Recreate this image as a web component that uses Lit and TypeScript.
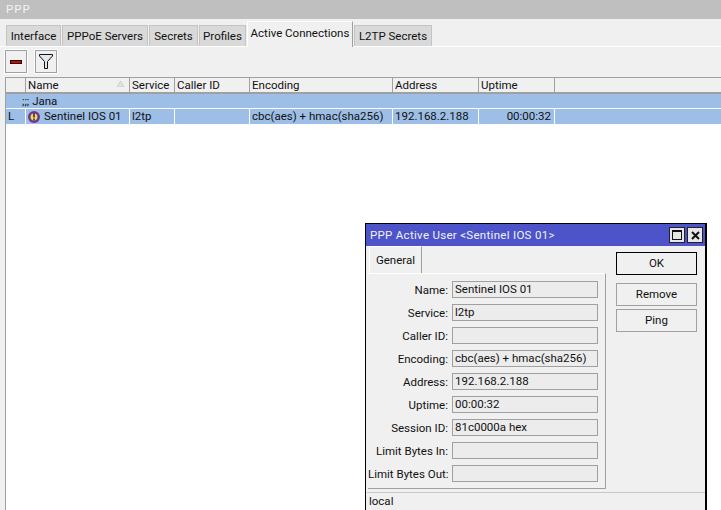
import { LitElement, html, css } from 'lit';
import { customElement } from 'lit/decorators.js';

const TABS = [
  { label: 'Interface', width: 55 },
  { label: 'PPPoE Servers', width: 86 },
  { label: 'Secrets', width: 49 },
  { label: 'Profiles', width: 47 },
  { label: 'Active Connections', width: 106, active: true },
  { label: 'L2TP Secrets', width: 78 }
];

const COLUMNS = [
  { label: '', width: 20 },
  { label: 'Name', width: 104, sort: true },
  { label: 'Service', width: 45 },
  { label: 'Caller ID', width: 75 },
  { label: 'Encoding', width: 143 },
  { label: 'Address', width: 86 },
  { label: 'Uptime', width: 76 }
];

const FIELDS = [
  ['Name:', 'Sentinel IOS 01'],
  ['Service:', 'l2tp'],
  ['Caller ID:', ''],
  ['Encoding:', 'cbc(aes) + hmac(sha256)'],
  ['Address:', '192.168.2.188'],
  ['Uptime:', '00:00:32'],
  ['Session ID:', '81c0000a hex'],
  ['Limit Bytes In:', ''],
  ['Limit Bytes Out:', '']
];

@customElement('app-root')
export class AppRoot extends LitElement {
  static styles = css`
    :host {
      display: block;
      position: relative;
      width: 721px;
      height: 510px;
      overflow: hidden;
      background: #f0f0f0;
      font-family: Roboto, 'Liberation Sans', sans-serif;
      font-size: 11.5px;
      color: #111;
    }
    .window {
      display: flex;
      flex-direction: column;
      height: 510px;
    }
    .titlebar {
      height: 19px;
      flex: none;
      background: #bfbfbf;
      color: #f4f4f4;
      padding-left: 6px;
      line-height: 19px;
      letter-spacing: 1px;
    }
    .tabs {
      height: 28px;
      flex: none;
      box-sizing: border-box;
      display: flex;
      align-items: flex-end;
      padding-left: 6px;
      gap: 1px;
      border-bottom: 1px solid #fff;
    }
    .tab {
      height: 21px;
      box-sizing: border-box;
      background: #d9d9d9;
      border: 1px solid #c4c4c4;
      border-bottom: none;
      text-align: center;
      line-height: 20px;
      flex: none;
    }
    .tab.active {
      height: 26px;
      background: #f0f0f0;
      border-color: #fff;
      border-right-color: #a0a0a0;
      line-height: 22px;
      margin-bottom: -1px;
    }
    .toolbar {
      height: 30px;
      flex: none;
      display: flex;
      align-items: flex-start;
      gap: 8px;
      padding: 3px 0 0 5px;
      box-sizing: border-box;
    }
    .tool {
      width: 22px;
      height: 23px;
      box-sizing: border-box;
      border: 1px solid #a0a0a0;
      outline: 1px solid #fff;
      display: flex;
      align-items: center;
      justify-content: center;
    }
    .table {
      flex: 1;
      margin-left: 5px;
      background: #fff;
      border-left: 1px solid #a0a0a0;
    }
    .head {
      height: 17px;
      box-sizing: border-box;
      display: flex;
      background: #f0f0f0;
      border-top: 1px solid #a0a0a0;
      border-bottom: 2px solid #a0a0a0;
    }
    .head .col {
      position: relative;
      box-sizing: border-box;
      border-right: 1px solid #a0a0a0;
      padding-left: 2px;
      line-height: 15px;
      white-space: nowrap;
    }
    .sort {
      position: absolute;
      right: 5px;
      top: 3px;
    }
    .group {
      height: 14px;
      background: #9dbee7;
      padding-left: 16px;
      line-height: 14px;
      margin-bottom: 1px;
    }
    .row {
      height: 15px;
      display: flex;
      background: #9dbee7;
      line-height: 15px;
    }
    .cell {
      box-sizing: border-box;
      border-right: 1px solid #fff;
      padding-left: 2px;
      white-space: nowrap;
      display: flex;
      align-items: center;
      gap: 4px;
    }
    .cell.right {
      justify-content: flex-end;
      padding-right: 3px;
    }
    .spacer {
      flex: 1;
    }
    .dialog {
      position: absolute;
      left: 365px;
      top: 223px;
      width: 342px;
      height: 300px;
      box-sizing: border-box;
      background: #f0f0f0;
      border: 1px solid #000;
      border-right-width: 2px;
    }
    .dlg-title {
      height: 22px;
      background: #4d53c8;
      color: #f2f2f2;
      display: flex;
      align-items: center;
      justify-content: space-between;
      padding: 0 2px 0 4px;
      letter-spacing: 0.3px;
    }
    .dlg-icons {
      display: flex;
      gap: 2px;
    }
    .dlg-icon {
      width: 14px;
      height: 14px;
      background: #e6e6e6;
      border: 1px solid #222;
      display: flex;
      align-items: center;
      justify-content: center;
    }
    .dlg-body {
      display: flex;
      height: 243px;
    }
    .dlg-left {
      width: 240px;
      padding-left: 2px;
      box-sizing: border-box;
      flex: none;
    }
    .dlg-tabs {
      height: 27px;
      padding-left: 1px;
      box-sizing: border-box;
    }
    .dlg-tab {
      width: 53px;
      height: 27px;
      box-sizing: border-box;
      border-top: 1px solid #fff;
      border-left: 1px solid #fff;
      border-right: 1px solid #a0a0a0;
      text-align: center;
      line-height: 26px;
    }
    .panel {
      height: 216px;
      box-sizing: border-box;
      border-top: 1px solid #fff;
      border-right: 1px solid #a0a0a0;
      border-bottom: 1px solid #a0a0a0;
      padding-top: 7px;
      display: flex;
      flex-direction: column;
      gap: 6px;
    }
    .field {
      display: flex;
      height: 17px;
      align-items: center;
      gap: 4px;
    }
    .field label {
      width: 80px;
      text-align: right;
      white-space: nowrap;
    }
    .value {
      width: 146px;
      height: 17px;
      box-sizing: border-box;
      border: 1px solid #a0a0a0;
      background: #ececec;
      padding-left: 2px;
      line-height: 15px;
      white-space: nowrap;
    }
    .actions {
      margin-left: 10px;
      padding-top: 6px;
      display: flex;
      flex-direction: column;
      gap: 3px;
    }
    .btn {
      width: 81px;
      height: 23px;
      box-sizing: border-box;
      border: 1px solid #a0a0a0;
      text-align: center;
      line-height: 21px;
    }
    .btn.default {
      border-color: #000;
      margin-bottom: 5px;
    }
    .status {
      margin: 3px 0 0 1px;
      border-top: 1px solid #c8c8c8;
      padding-left: 2px;
      line-height: 16px;
    }
  `;

  render() {
    return html`
      <div class="window">
        <div class="titlebar">PPP</div>
        <div class="tabs">
          ${TABS.map(t => html`
            <div class="tab ${t.active ? 'active' : ''}" style="width:${t.width}px">${t.label}</div>
          `)}
        </div>
        <div class="toolbar">
          <div class="tool">
            <svg width="12" height="4"><rect width="12" height="4" fill="#111"/><rect x="1" y="1" width="10" height="2" fill="#e00000"/></svg>
          </div>
          <div class="tool">
            <svg width="14" height="15" viewBox="0 0 14 15"><path d="M.5.5h13v1.5L8.5 7.5v7h-3v-7L.5 2z" fill="#dfe9ee" stroke="#111"/></svg>
          </div>
        </div>
        <div class="table">
          <div class="head">
            ${COLUMNS.map(c => html`
              <div class="col" style="width:${c.width}px">${c.label}
                ${c.sort ? html`<svg class="sort" width="7" height="6"><path d="M3.5 0L7 6H0z" fill="#e4e4e4" stroke="#bbb" stroke-width=".6"/></svg>` : ''}
              </div>
            `)}
          </div>
          <div class="group">;;; Jana</div>
          <div class="row">
            <div class="cell" style="width:20px">L</div>
            <div class="cell" style="width:104px">
              <svg width="12" height="12" viewBox="0 0 12 12" style="flex:none">
                <circle cx="6" cy="6" r="6" fill="#6b3a8f"/>
                <circle cx="6" cy="6" r="3.4" fill="#f0e040"/>
                <rect x="5" y="2" width="2" height="4.5" fill="#6b3a8f"/>
                <rect x="5" y="7.5" width="2" height="2" fill="#6b3a8f"/>
              </svg>
              Sentinel IOS 01
            </div>
            <div class="cell" style="width:45px">l2tp</div>
            <div class="cell" style="width:75px"></div>
            <div class="cell" style="width:143px">cbc(aes) + hmac(sha256)</div>
            <div class="cell" style="width:86px">192.168.2.188</div>
            <div class="cell right" style="width:76px">00:00:32</div>
            <div class="spacer"></div>
          </div>
        </div>
      </div>

      <div class="dialog">
        <div class="dlg-title">
          <span>PPP Active User &lt;Sentinel IOS 01&gt;</span>
          <span class="dlg-icons">
            <span class="dlg-icon"><svg width="10" height="10"><rect x=".5" y=".5" width="9" height="9" fill="none" stroke="#111"/><rect width="10" height="2" fill="#111"/></svg></span>
            <span class="dlg-icon"><svg width="9" height="9"><path d="M1 1l7 7M8 1l-7 7" stroke="#111" stroke-width="2"/></svg></span>
          </span>
        </div>
        <div class="dlg-body">
          <div class="dlg-left">
            <div class="dlg-tabs"><div class="dlg-tab">General</div></div>
            <div class="panel">
              ${FIELDS.map(([k, v]) => html`
                <div class="field"><label>${k}</label><div class="value">${v}</div></div>
              `)}
            </div>
          </div>
          <div class="actions">
            <div class="btn default">OK</div>
            <div class="btn">Remove</div>
            <div class="btn">Ping</div>
          </div>
        </div>
        <div class="status">local</div>
      </div>
    `;
  }
}
